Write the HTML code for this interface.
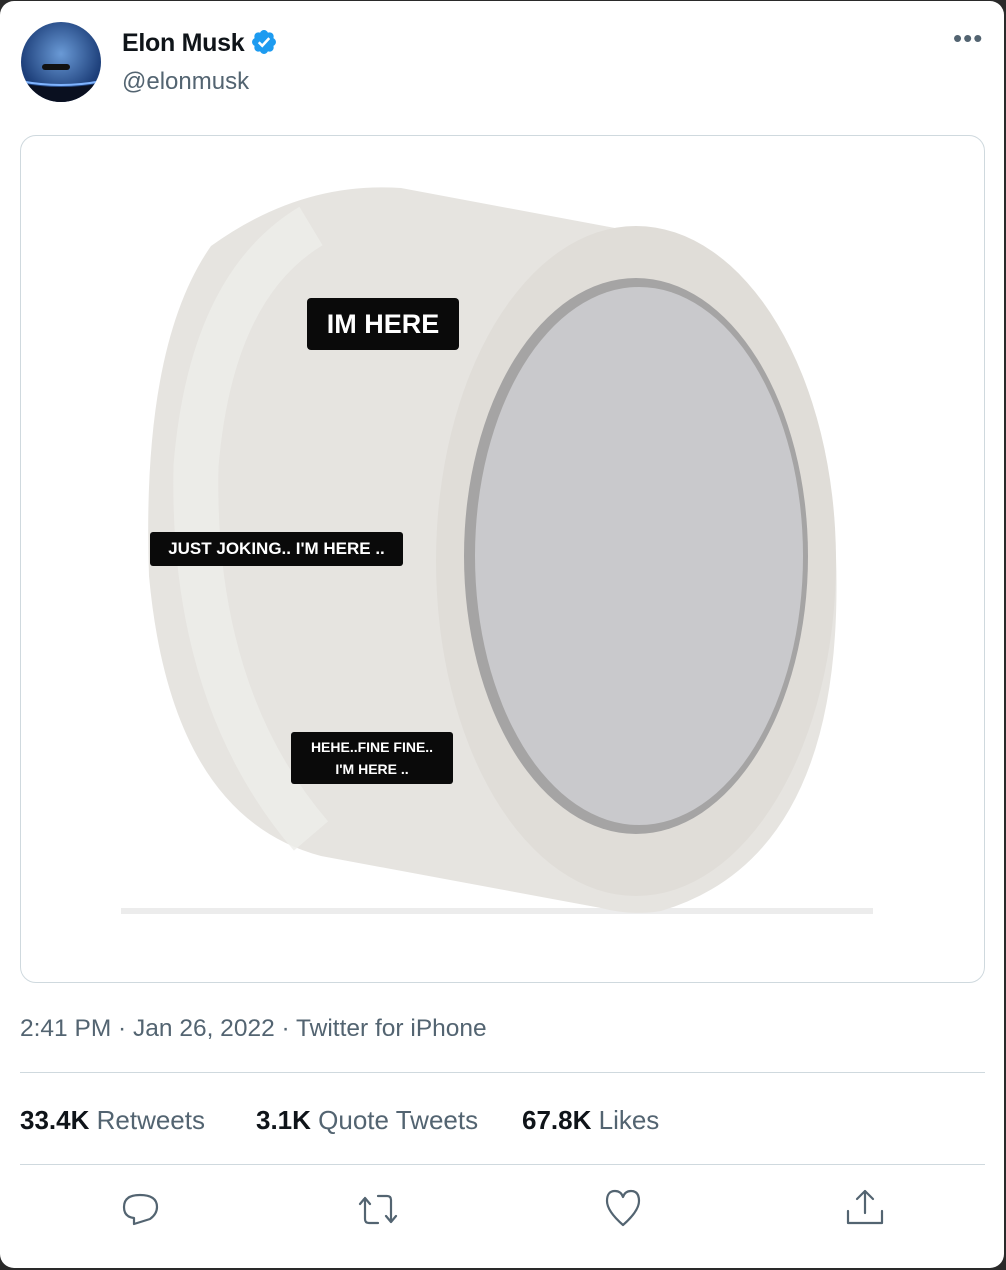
<!DOCTYPE html>
<html><head><style>
body{margin:0;width:1006px;height:1270px;background:#2a2a2a;font-family:"Liberation Sans",sans-serif;overflow:hidden}
.card{position:absolute;left:0;top:1px;width:1004px;height:1267px;background:#fff;border-radius:14px}
.name{position:absolute;left:122px;top:28px;font-size:25px;font-weight:bold;color:#0f1419;letter-spacing:-0.3px}
.handle{position:absolute;left:122px;top:67px;font-size:24px;color:#536471}
.meta{position:absolute;left:20px;top:1014px;font-size:24.5px;color:#536471}
.hr{position:absolute;left:20px;width:965px;height:1px;background:#cfd9de}
.stats{position:absolute;top:1104px;font-size:26px;color:#536471}
.stats b{color:#0f1419}
</style></head><body>
<div class="card">
<svg style="position:absolute;left:20px;top:20px" width="82" height="82"><defs><radialGradient id="g" cx="50%" cy="40%"><stop offset="0" stop-color="#6a9ad6"/><stop offset="1" stop-color="#1d3f7a"/></radialGradient><clipPath id="c"><circle cx="41" cy="41" r="40"/></clipPath></defs><g clip-path="url(#c)"><rect width="82" height="82" fill="url(#g)"/><path d="M0 62 Q41 70 82 62 V82 H0Z" fill="#0a1020"/><path d="M0 60 Q41 68 82 60" stroke="#7fb4ff" stroke-width="2" fill="none"/><rect x="22" y="43" width="28" height="6" rx="3" fill="#111"/></g></svg>
<div class="name">Elon Musk</div>
<svg style="position:absolute;left:250px;top:27px" width="28" height="28" viewBox="0 0 24 24"><path fill="#1d9bf0" d="M22.25 12c0-1.43-.88-2.670-2.190-3.34.46-1.39.2-2.9-.81-3.910s-2.520-1.270-3.910-.81c-.66-1.310-1.910-2.190-3.340-2.190s-2.670.88-3.330 2.190c-1.400-.46-2.910-.2-3.920.81s-1.260 2.520-.8 3.910c-1.310.67-2.200 1.910-2.200 3.340s.89 2.670 2.200 3.340c-.46 1.390-.21 2.900.8 3.910s2.520 1.260 3.910.81c.67 1.310 1.910 2.190 3.340 2.190s2.680-.88 3.340-2.190c1.390.45 2.900.2 3.910-.81s1.270-2.520.81-3.910c1.310-.67 2.190-1.910 2.190-3.340z"/><path d="M7.5 12.2l3 3 6-6.5" stroke="#fff" stroke-width="2.2" fill="none"/></svg>
<div class="handle">@elonmusk</div>
<div style="position:absolute;left:953px;top:22px;color:#536471;font-size:26px;letter-spacing:1px">•••</div>
<div style="position:absolute;left:20px;top:134px;width:963px;height:846px;border:1px solid #cfd9de;border-radius:16px;overflow:hidden;background:#fff">
<svg width="963" height="846">
<rect x="100" y="772" width="752" height="6" fill="#ececec"/>
<path d="M190 110 Q280 45 380 52 L610 95 Q800 150 815 420 Q825 720 640 775 Q610 780 580 772 L300 720 Q150 680 128 440 Q120 210 190 110Z" fill="#e6e4e0"/>
<path d="M290 90 Q190 150 175 330 Q170 560 290 700" stroke="#eeedea" stroke-width="45" fill="none" opacity=".8"/>
<ellipse cx="615" cy="425" rx="200" ry="335" fill="#e0ddd8"/>
<ellipse cx="615" cy="420" rx="172" ry="278" fill="#a5a4a4"/>
<ellipse cx="618" cy="420" rx="164" ry="269" fill="#c9c9cc"/>
</svg>
<div style="position:absolute;left:286px;top:162px;width:152px;height:52px;background:#0a0a0a;border-radius:4px;color:#fff;font-weight:bold;font-size:27px;text-align:center;line-height:52px">IM HERE</div>
<div style="position:absolute;left:129px;top:396px;width:253px;height:34px;background:#0a0a0a;border-radius:3px;color:#fff;font-weight:bold;font-size:17px;text-align:center;line-height:34px">JUST JOKING.. I'M HERE ..</div>
<div style="position:absolute;left:270px;top:596px;width:162px;height:52px;background:#0a0a0a;border-radius:3px;color:#fff;font-weight:bold;font-size:14px;text-align:center;line-height:22px;padding-top:4px;box-sizing:border-box">HEHE..FINE FINE..<br>I'M HERE ..</div>
</div>
<div class="meta">2:41 PM · Jan 26, 2022 · Twitter for iPhone</div>
<div class="hr" style="top:1071px"></div>
<div class="stats" style="left:20px"><b>33.4K</b> Retweets</div>
<div class="stats" style="left:256px"><b>3.1K</b> Quote Tweets</div>
<div class="stats" style="left:522px"><b>67.8K</b> Likes</div>
<div class="hr" style="top:1163px"></div>
<svg style="position:absolute;left:0;top:1180px" width="1006" height="50" fill="none" stroke="#536471" stroke-width="2.2" stroke-linejoin="round" stroke-linecap="round">
<path d="M134 43 L134 37 Q124 36 124 26 Q124 14 140 14 Q157 14 157 26 Q157 33 150 38 Z"/>
<path d="M365 17 l-5 6 M365 17 l5 6 M365 17 V38 Q365 42 369 42 H378 M378 15 H387 Q391 15 391 19 V41 M391 41 l-5 -6 M391 41 l5 -6"/>
<path d="M623 44 Q607 30 607 20 Q607 10 615 10 Q621 10 623 16 Q625 10 631 10 Q639 10 639 20 Q639 30 623 44Z"/>
<path d="M865 10 V32 M857 18 L865 10 L873 18 M848 30 V42 H882 V30"/>
</svg>
</div>
</body></html>
